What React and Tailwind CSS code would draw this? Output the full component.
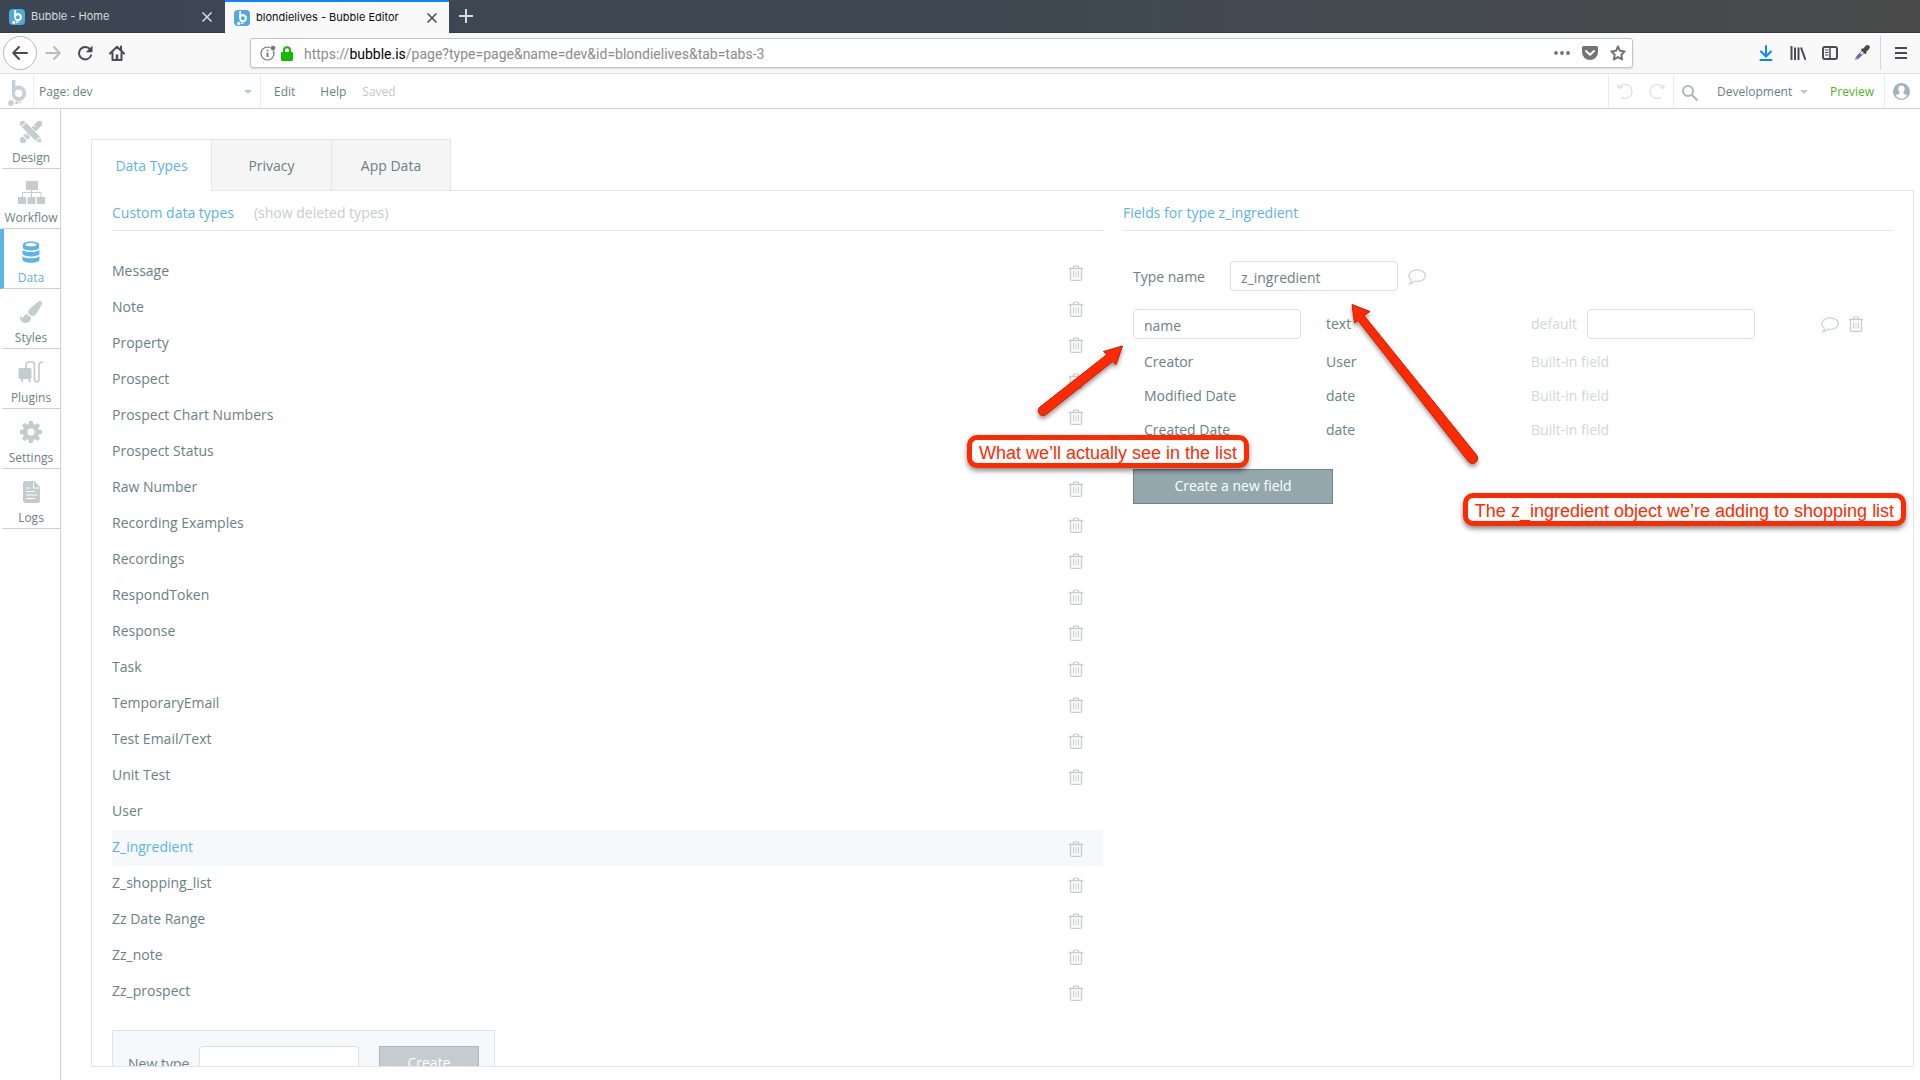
import React from "react";
import { FaPaintBrush } from "react-icons/fa";

const dataTypes = [
  "Message",
  "Note",
  "Property",
  "Prospect",
  "Prospect Chart Numbers",
  "Prospect Status",
  "Raw Number",
  "Recording Examples",
  "Recordings",
  "RespondToken",
  "Response",
  "Task",
  "TemporaryEmail",
  "Test Email/Text",
  "Unit Test",
  "User",
  "Z_ingredient",
  "Z_shopping_list",
  "Zz Date Range",
  "Zz_note",
  "Zz_prospect",
];

const builtInFields = [
  { name: "Creator", type: "User" },
  { name: "Modified Date", type: "date" },
  { name: "Created Date", type: "date" },
];

/* ---------- icons ---------- */

const BubbleMark = ({ className }) => (
  <svg viewBox="0 0 18 26" className={className} fill="currentColor">
    <path d="M4 0h3.4v9L4 14z" />
    <path
      fillRule="evenodd"
      d="M10.5 5.600a7.700 7.700 0 1 1 0 15.400c-4.200 0-6.500-3.200-6.500-7.700V8.500l3.400-2.100a8 8 0 0 1 3.100-.8zm.2 4a3.700 3.700 0 1 0 0 7.400 3.700 3.700 0 0 0 0-7.400z"
    />
    <circle cx="3" cy="23" r="2.900" />
    <circle cx="8.800" cy="22.800" r="1.700" />
    <circle cx="12.300" cy="22.300" r="1.100" />
  </svg>
);

const TabLogo = () => (
  <span className="flex h-4 w-4 shrink-0 items-center justify-center rounded-sm bg-[#4fa9dd] text-white">
    <BubbleMark className="h-[14px] w-[10px]" />
  </span>
);

const TrashIcon = () => (
  <svg viewBox="0 0 14 16" className="h-4 w-[14px]" fill="none" stroke="currentColor">
    <path d="M0 3.500h14" strokeWidth="1.500" />
    <path d="M4.500 3.300V1.800q0-.8.8-.8h3.400q.8 0 .8.800v1.500" strokeWidth="1.200" />
    <path d="M1.500 3.700v10q0 1.600 1.600 1.600h7.800q1.600 0 1.600-1.600v-10" strokeWidth="1.300" />
    <path d="M4.500 6.200v6.300M7 6.200v6.300M9.500 6.200v6.300" />
  </svg>
);

const CommentIcon = () => (
  <svg viewBox="0 0 18 16" className="h-4 w-[18px]" fill="none" stroke="currentColor" strokeWidth="1.300" strokeLinejoin="round">
    <path d="M9.300.8c4.500 0 8.100 2.600 8.100 5.800s-3.600 5.800-8.100 5.800c-.9 0-1.800-.1-2.600-.3-1.300 1.500-2.900 2.500-5 2.900 1-1 1.700-2.200 1.800-3.700C1.800 10.200.8 8.500.8 6.600.8 3.400 4.800.8 9.300.8z" />
  </svg>
);

const Caret = () => (
  <svg viewBox="0 0 8 4" className="pointer-events-none h-1 w-2 text-[#bcc8cf]" fill="currentColor">
    <path d="M0 0h8L4 4z" />
  </svg>
);

const DesignIcon = () => (
  <svg viewBox="0 0 22 22" className="h-[22px] w-[22px]" fill="currentColor">
    <g transform="rotate(-45 11 11)">
      <path d="M-2.500 8h4.500v6h-4.500q-1 0-1-1V9q0-1 1-1zM3 8h2.200v2.500h1V8h3v2.500h1V8h3v2.500h1V8h3v2.500h1V8H25q1 0 1 1v4q0 1-1 1H3z" />
    </g>
    <g transform="rotate(45 11 11)">
      <path d="M-3.500 7.200H25.500v7.600H-3.500z" fill="white" />
      <path d="M-2.500 8H0v6h-2.500q-1 0-1-1V9q0-1 1-1zM1 8h19.500v6H1zM21.500 8.300L26 11l-4.500 2.700z" />
    </g>
  </svg>
);

const WorkflowIcon = () => (
  <svg viewBox="0 0 27 23" className="h-[23px] w-[27px]" fill="currentColor">
    <path d="M8 0h12v9H8zM0 16h8v7H0zM9.500 16h8v7h-8zM19 16h8v7h-8z" />
    <path d="M13.500 9v7M4.500 16v-4.500h18.500v4.500" fill="none" stroke="currentColor" />
  </svg>
);

const DataIcon = () => (
  <svg viewBox="0 0 18 22" className="h-[22px] w-[18px]" fill="currentColor">
    <path
      fillRule="evenodd"
      d="M9 .5c4.700 0 8.200 1.300 8.200 3.200v2.800C17.200 8.300 13.500 9.500 9 9.500S.8 8.300.8 6.500V3.700C.8 1.800 4.300.5 9 .5zm0 1.600c-3.300 0-5.600.7-5.600 1.600S5.700 5.300 9 5.300s5.600-.7 5.600-1.600S12.300 2.100 9 2.100z"
    />
    <path d="M.5 9C2.200 10.500 5.400 11 9 11s6.800-.5 8.500-2v3.500c0 1.800-3.700 3-8.500 3s-8.500-1.200-8.500-3z" />
    <path d="M.5 15.200C2.200 16.700 5.400 17.200 9 17.200s6.800-.5 8.500-2v3.300c0 2-3.700 3.200-8.500 3.200s-8.500-1.200-8.500-3.200z" />
  </svg>
);

const PluginsIcon = () => (
  <svg viewBox="0 0 26 22" className="h-[22px] w-[26px]" fill="currentColor">
    <path d="M2 7h10q1.500 0 1.500 1.500v8q0 1-1 1.300V21h-2v-3H5v3H3v-3H2q-1.500 0-1.500-1.500v-8Q.5 7 2 7z" />
    <path
      d="M8 7.500V4q0-3 3-3h3q2.500 0 2.500 3v14q0 2.800 2.300 2.800T21 18V4q0-3 4-3"
      fill="none"
      stroke="currentColor"
      strokeWidth="1.700"
    />
  </svg>
);

const SettingsIcon = () => (
  <svg viewBox="-11 -11 22 22" className="h-[22px] w-[22px]" fill="currentColor">
    {[0, 45, 90, 135, 180, 225, 270, 315].map((a) => (
      <path key={a} d="M-2.600-6.500l.7-4.500h3.800l.7 4.500z" transform={`rotate(${a})`} />
    ))}
    <circle r="5.900" fill="none" stroke="currentColor" strokeWidth="4.600" />
  </svg>
);

const LogsIcon = () => (
  <svg viewBox="0 0 17 22" className="h-[22px] w-[17px]">
    <path d="M2 0h9.500L17 6v14q0 2-2 2H2q-2 0-2-2V2Q0 0 2 0z" fill="currentColor" />
    <path d="M10.500 1.500V7H16M3 7h4.500M3 10.500h9M3 14h11M3 17.500h9" fill="none" stroke="white" />
  </svg>
);

const sidebarItems = [
  { label: "Design", Icon: DesignIcon },
  { label: "Workflow", Icon: WorkflowIcon },
  { label: "Data", Icon: DataIcon, active: true },
  { label: "Styles", Icon: () => <FaPaintBrush size={22} /> },
  { label: "Plugins", Icon: PluginsIcon },
  { label: "Settings", Icon: SettingsIcon },
  { label: "Logs", Icon: LogsIcon },
];

/* ---------- browser chrome ---------- */

const CloseIcon = () => (
  <svg viewBox="0 0 10 10" className="h-[10px] w-[10px]" stroke="currentColor" strokeWidth="1.500">
    <path d="M.5.5l9 9M9.500.5l-9 9" />
  </svg>
);

const BrowserTabs = () => (
  <div className="flex h-[33px] shrink-0 border-b border-[#333c46] bg-gradient-to-r from-[#3b4652] via-[#3e4852] to-[#4a4a4a] font-[Inter,sans-serif] text-[11px]">
    <div className="flex w-[225px] items-center pl-[9px] pr-[13px] pt-0.5 text-[#d9dcdf]">
      <TabLogo />
      <span className="ml-1.5 flex-1">Bubble - Home</span>
      <button aria-label="Close tab"><CloseIcon /></button>
    </div>
    <div className="-mb-px flex w-[224px] items-center border-t-2 border-[#0a84ff] bg-[#f9f9fa] pl-[9px] pr-3 text-[#0c0c0d]">
      <TabLogo />
      <span className="ml-1.5 flex-1">blondielives - Bubble Editor</span>
      <button aria-label="Close tab" className="text-[#4a4a4f]"><CloseIcon /></button>
    </div>
    <button aria-label="New tab" className="ml-[10px] text-[#d9dcdf]">
      <svg viewBox="0 0 14 14" className="h-[14px] w-[14px]" stroke="currentColor" strokeWidth="2">
        <path d="M7 0v14M0 7h14" />
      </svg>
    </button>
  </div>
);

const NavIcon = ({ label, children, className = "" }) => (
  <button aria-label={label} className={className}>
    <svg viewBox="0 0 16 16" className="h-4 w-4" fill="none" stroke="currentColor" strokeWidth="2">
      {children}
    </svg>
  </button>
);

const BrowserToolbar = () => (
  <div className="flex h-[41px] shrink-0 items-center border-b border-[#e1e1e2] bg-[#f9f9fa] text-[#4a4a4f]">
    <div className="flex w-[250px] items-center gap-4 pl-[3px]">
      <button aria-label="Back" className="flex h-[34px] w-[34px] items-center justify-center rounded-full border border-[#b9b9bb] bg-white">
        <svg viewBox="0 0 16 16" className="h-4 w-4" fill="none" stroke="currentColor" strokeWidth="2" strokeLinecap="round" strokeLinejoin="round">
          <path d="M15 8H1.500M7 2L1.200 8 7 14" />
        </svg>
      </button>
      <NavIcon label="Forward" className="-ml-2 text-[#bdbdbf]">
        <path d="M1 8h13.500M9 2l5.800 6L9 14" strokeLinecap="round" strokeLinejoin="round" />
      </NavIcon>
      <NavIcon label="Reload">
        <path d="M13.200 4.500A6.200 6.200 0 1 0 14 10.500" strokeLinecap="round" />
        <path d="M15.500.5v6.700H8.800z" fill="currentColor" stroke="none" />
      </NavIcon>
      <NavIcon label="Home">
        <path d="M1 8.500L8 1.800l7 6.700M3.500 8v7h9V8M12 1.500v3" strokeLinecap="round" strokeLinejoin="round" />
        <path d="M8 9.500V15" strokeWidth="2.500" />
      </NavIcon>
    </div>

    <div className="flex h-[30px] flex-1 items-center rounded-[3px] border border-[#c4c4c6] bg-white pl-[9px] pr-[6px] shadow-sm">
      <svg viewBox="0 0 16 16" className="h-4 w-4" fill="none" stroke="#737373">
        <circle cx="7.500" cy="8.500" r="6.500" strokeWidth="1.200" />
        <path d="M7.500 7.500v4.500M7.500 4.800v1.500" strokeWidth="1.800" />
        <circle cx="13" cy="3" r="2.600" fill="#737373" stroke="white" strokeWidth=".6" />
      </svg>
      <svg viewBox="0 0 12 15" className="ml-[5px] h-[15px] w-3" fill="#12bc00">
        <path d="M1.200 6h9.600Q12 6 12 7.200v6.600q0 1.200-1.200 1.200H1.200Q0 15 0 13.800V7.200Q0 6 1.200 6z" />
        <path d="M3 7V4.200a3 3 0 0 1 6 0V7" fill="none" stroke="#12bc00" strokeWidth="2" />
      </svg>
      <div role="textbox" aria-label="Address" className="ml-[11px] flex-1 pt-0.5 font-[Roboto,sans-serif] text-sm text-[#8b8b8b]">
        https://<span className="text-black">bubble.is</span>/page?type=page&amp;name=dev&amp;id=blondielives&amp;tab=tabs-3
      </div>
      <div className="flex items-center gap-3 text-[#737373]">
        <NavIcon label="Page actions">
          <g fill="currentColor" stroke="none">
            <circle cx="2" cy="8" r="1.900" />
            <circle cx="8" cy="8" r="1.900" />
            <circle cx="14" cy="8" r="1.900" />
          </g>
        </NavIcon>
        <NavIcon label="Save to Pocket">
          <path d="M1.500 1h13Q16 1 16 2.500V7a8 8 0 0 1-16 0V2.500Q0 1 1.500 1z" fill="currentColor" stroke="none" />
          <path d="M4 6l4 3.800L12 6" stroke="white" strokeLinecap="round" strokeLinejoin="round" />
        </NavIcon>
        <NavIcon label="Bookmark">
          <path d="M8 1.500l2 4.300 4.700.6-3.400 3.300.8 4.700L8 12.100l-4.100 2.300.8-4.700L1.300 6.400 6 5.800z" strokeLinejoin="round" />
        </NavIcon>
      </div>
    </div>

    <div className="flex w-[287px] items-center justify-end pr-[11px]">
      <NavIcon label="Downloads" className="mr-4 text-[#0a84ff]">
        <path d="M8 1v10M3 6.500l5 5 5-5M2.500 15h11" strokeLinejoin="round" strokeLinecap="round" />
      </NavIcon>
      <NavIcon label="Library" className="mr-4">
        <path d="M1.500 1v14M5 2.500V15M8.500 2.500V15M11 2.500L15.500 15" />
      </NavIcon>
      <NavIcon label="Sidebars" className="mr-4">
        <rect x="1" y="2" width="14" height="12" rx="2" />
        <path d="M8 2v12" strokeWidth="1.500" />
        <path d="M3 5h3.500M3 7.500h3.500M3 10h3.500" strokeWidth="1" />
      </NavIcon>
      <NavIcon label="Color picker" className="mr-[10px]">
        <path d="M1.500 14.500l1-3L9 5l2 2-6.500 6.500z" fill="#dfe3ff" stroke="#8c8c96" strokeWidth="1" />
        <path d="M3 13l4-4" stroke="#4a55e0" />
        <path d="M7.500 4l4.500 4.500M10 6l3.500-3.500" strokeWidth="2" stroke="#3a3a3c" />
        <path d="M11 4.800L13.500 2.300" strokeWidth="4.500" strokeLinecap="round" stroke="#4a4a4c" />
      </NavIcon>
      <span className="mr-3 h-[34px] w-px bg-[#d7d7db]" />
      <NavIcon label="Menu">
        <path d="M2 3h12M2 8h12M2 13h12" />
      </NavIcon>
    </div>
  </div>
);

/* ---------- editor ---------- */

const EditorHeader = () => (
  <header className="flex h-[35px] shrink-0 items-stretch border-b border-[#cfcfcf] text-xs">
    <a href="#home" aria-label="Bubble" className="flex w-[34px] justify-center border-r border-[#e7ecef] pt-1.5 text-[#c5d0d8]">
      <BubbleMark className="h-[26px] w-[18px]" />
    </a>
    <div className="flex w-[227px] items-center border-r border-[#e7ecef] pr-2 pt-0.5">
      <select aria-label="Page" className="flex-1 appearance-none pl-[5px]">
        <option>Page: dev</option>
      </select>
      <Caret />
    </div>
    <nav className="flex flex-1 items-center pl-[13px] pt-0.5">
      <button>Edit</button>
      <button className="ml-[25px]">Help</button>
      <span className="ml-4 text-[#c3c6c8]">Saved</span>
    </nav>
    <div className="flex w-[65px] items-center justify-between border-l border-[#e7ecef] px-2 text-[#e0e3e5]">
      <button aria-label="Undo">
        <svg viewBox="0 0 16 16" className="h-4 w-4" fill="none" stroke="currentColor" strokeWidth="1.500">
          <path d="M2.500 4A7 7 0 1 1 4.500 14.500M.8 1.500L1.500 5l4-.8" />
        </svg>
      </button>
      <button aria-label="Redo">
        <svg viewBox="0 0 16 16" className="h-4 w-4" fill="none" stroke="currentColor" strokeWidth="1.500">
          <path d="M13.500 4A7 7 0 1 0 11.500 14.500M15.200 1.500L14.500 5l-4-.8" />
        </svg>
      </button>
    </div>
    <div className="flex w-[211px] items-center border-l border-[#e7ecef] pl-2 pr-[10px] pt-0.5">
      <button aria-label="Search" className="pt-0.5 text-[#a9b9bf]">
        <svg viewBox="0 0 16 16" className="h-4 w-4" fill="none" stroke="currentColor" strokeWidth="2">
          <circle cx="6" cy="6" r="5" />
          <path d="M9.500 9.500l6 6" />
        </svg>
      </button>
      <select aria-label="Version" className="ml-[19px] w-[83px] appearance-none">
        <option>Development</option>
      </select>
      <Caret />
      <a href="#preview" className="ml-auto text-[#4fb31c]">Preview</a>
    </div>
    <button aria-label="Account" className="flex w-9 items-center justify-center border-l border-[#e7ecef] pr-0.5">
      <svg viewBox="0 0 17 17" className="h-[17px] w-[17px]">
        <circle cx="8.500" cy="8.500" r="8.500" fill="#a3b3ba" />
        <path
          d="M8.500 2.500c2 0 3.200 1.400 3.200 3.300 0 1.500-.6 2.700-1.400 3.400v1.100l3.200 1.600c.5.300.7.700.5 1.100a7 7 0 0 1-11 0c-.2-.4 0-.8.5-1.100l3.200-1.600V9.200c-.8-.7-1.400-1.900-1.400-3.400 0-1.900 1.200-3.300 3.200-3.300z"
          fill="white"
        />
      </svg>
    </button>
  </header>
);

const Sidebar = () => (
  <nav className="w-[61px] shrink-0 border-r border-[#cfcfcf] text-xs">
    {sidebarItems.map(({ label, Icon, active }) => (
      <button
        key={label}
        className={`flex h-[60px] w-full flex-col items-center border-b border-l-4 border-b-[#cfcfcf] pr-0.5 pt-[11px] ${
          active ? "border-l-[#5bb4e5] text-[#5bb4e5]" : "border-l-transparent text-[#6b7f86]"
        }`}
      >
        <span className={`flex h-6 items-center ${active ? "" : "text-[#c3cccf]"}`}>
          <Icon />
        </span>
        <span className="mt-1.5 leading-4">{label}</span>
      </button>
    ))}
  </nav>
);

const DataTypeList = () => (
  <section className="min-w-0 flex-1">
    <div className="flex h-10 items-center gap-5 border-b border-[#e3e5e6] pt-1">
      <h2 className="text-[#5bb4e5]">Custom data types</h2>
      <button className="text-[#c9cccd]">(show deleted types)</button>
    </div>

    <ul className="mt-[23px]">
      {dataTypes.map((name) => {
        const selected = name === "Z_ingredient";

        return (
          <li
            key={name}
            className={`flex h-9 items-center justify-between pr-5 ${selected ? "bg-[#f5f9fb] text-[#5bb4e5]" : ""}`}
          >
            <button className="pb-0.5">{name}</button>
            {name !== "User" && (
              <button aria-label={`Delete ${name}`} className="pt-0.5 text-[#c3cdd1]">
                <TrashIcon />
              </button>
            )}
          </li>
        );
      })}
    </ul>

    <form className="mt-5 flex h-16 w-[383px] items-center border border-[#e0e4e5] bg-[#f5f9fb] pl-[15px]">
      <label htmlFor="new-type" className="w-[71px] pt-1">New type</label>
      <input id="new-type" className="h-8 w-40 rounded-sm border border-[#dcdfe0] bg-white px-2.5" />
      <button type="button" className="ml-5 h-8 w-[100px] border border-[#adb8bb] bg-[#c4cccf] pt-0.5 text-white">
        Create
      </button>
    </form>
  </section>
);

const Callout = ({ className, children }) => (
  <p
    className={`absolute flex h-[33px] items-center justify-center whitespace-nowrap rounded-[10px] border-[5px] border-[#ff2a00] bg-white pt-0.5 font-['Liberation_Sans',Arial,sans-serif] text-lg text-[#ff2a00] shadow-[0_3px_5px_rgba(0,0,0,0.45)] ${className}`}
  >
    {children}
  </p>
);

const Annotations = () => (
  <>
    <svg
      viewBox="0 0 480 180"
      className="pointer-events-none absolute -left-[100px] top-[100px] h-[180px] w-[480px] drop-shadow-[0_3px_2px_rgba(0,0,0,0.4)]"
      fill="#ff2a00"
      stroke="#c21f00"
    >
      <path d="M17 116L84 63.500 80.500 60.500 99.500 55 93 73.500 89.500 70.500 23 123.500A4.800 4.800 0 0 1 17 116z" />
      <path d="M329 13.500L347 20.500 341 24.500 453.500 164A5 5 0 0 1 445.500 170.500L335 29.500 331.500 32z" />
    </svg>
    <Callout className="-left-[156px] top-[244px] w-[282px]">What we’ll actually see in the list</Callout>
    <Callout className="left-[340px] top-[302px] w-[443px]">
      The z_ingredient object we’re adding to shopping list
    </Callout>
  </>
);

const FieldList = () => (
  <section className="relative w-[770px] shrink-0">
    <div className="flex h-10 items-center border-b border-[#e3e5e6] pt-1">
      <h2 className="text-[#5bb4e5]">Fields for type z_ingredient</h2>
    </div>

    <div className="pl-[10px] pt-[30px]">
      <div className="flex h-[30px] items-center">
        <label htmlFor="type-name" className="w-[97px] pt-0.5">Type name</label>
        <input
          id="type-name"
          defaultValue="z_ingredient"
          className="h-[30px] w-[168px] rounded-sm border border-[#dcdfe0] px-2.5 pt-0.5"
        />
        <button aria-label="Comment on type" className="ml-[10px] pt-0.5 text-[#c8d4d8]">
          <CommentIcon />
        </button>
      </div>

      <table className="mt-3 w-full table-fixed text-left">
        <colgroup>
          <col className="w-[193px]" />
          <col className="w-[205px]" />
          <col />
        </colgroup>
        <tbody>
          <tr className="h-[42px]">
            <td>
              <input
                aria-label="Field name"
                defaultValue="name"
                className="block h-[30px] w-[168px] rounded-sm border border-[#dcdfe0] px-2.5 pt-0.5"
              />
            </td>
            <td>text</td>
            <td>
              <div className="flex items-center text-[#d3d6d7]">
                <label htmlFor="default-value" className="w-14">default</label>
                <input
                  id="default-value"
                  className="h-[30px] w-[168px] rounded-sm border border-[#dcdfe0] px-2.5"
                />
                <button aria-label="Comment on field" className="ml-auto pt-0.5 text-[#c8d4d8]">
                  <CommentIcon />
                </button>
                <button aria-label="Delete field" className="ml-[10px] mr-[30px] text-[#c3cdd1]">
                  <TrashIcon />
                </button>
              </div>
            </td>
          </tr>
          {builtInFields.map((field) => (
            <tr key={field.name} className="h-[34px]">
              <td className="pl-[11px]">{field.name}</td>
              <td>{field.type}</td>
              <td className="text-[#d3d6d7]">Built-in field</td>
            </tr>
          ))}
        </tbody>
      </table>

      <button className="mt-[22px] h-[35px] w-[200px] border border-[#6d8289] bg-[#94a7ad] pb-0.5 text-white">
        Create a new field
      </button>
    </div>

    <Annotations />
  </section>
);

const tabs = ["Data Types", "Privacy", "App Data"];

export default function App() {
  return (
    <div className="flex h-screen flex-col overflow-hidden bg-white font-['Open_Sans',sans-serif] text-sm text-[#6b7f86]">
      <BrowserTabs />
      <BrowserToolbar />
      <EditorHeader />

      <div className="flex min-h-0 flex-1">
        <Sidebar />

        <main className="flex min-w-0 flex-1 flex-col pb-[13px] pl-[30px] pr-1.5 pt-[30px]">
          <div role="tablist" className="flex">
            {tabs.map((tab, i) => (
              <button
                key={tab}
                role="tab"
                aria-selected={i === 0}
                className={
                  i === 0
                    ? "z-10 -mb-px h-[52px] w-[120px] border-l border-t border-[#e3e5e6] bg-white text-[#5bb4e5]"
                    : "h-[51px] w-[120px] border-l border-t border-[#e3e5e6] bg-[#f5f5f5] pt-0.5 last:border-r"
                }
              >
                {tab}
              </button>
            ))}
          </div>

          <div className="flex min-h-0 flex-1 gap-5 overflow-hidden border border-[#e3e5e6] px-5">
            <DataTypeList />
            <FieldList />
          </div>
        </main>
      </div>
    </div>
  );
}
